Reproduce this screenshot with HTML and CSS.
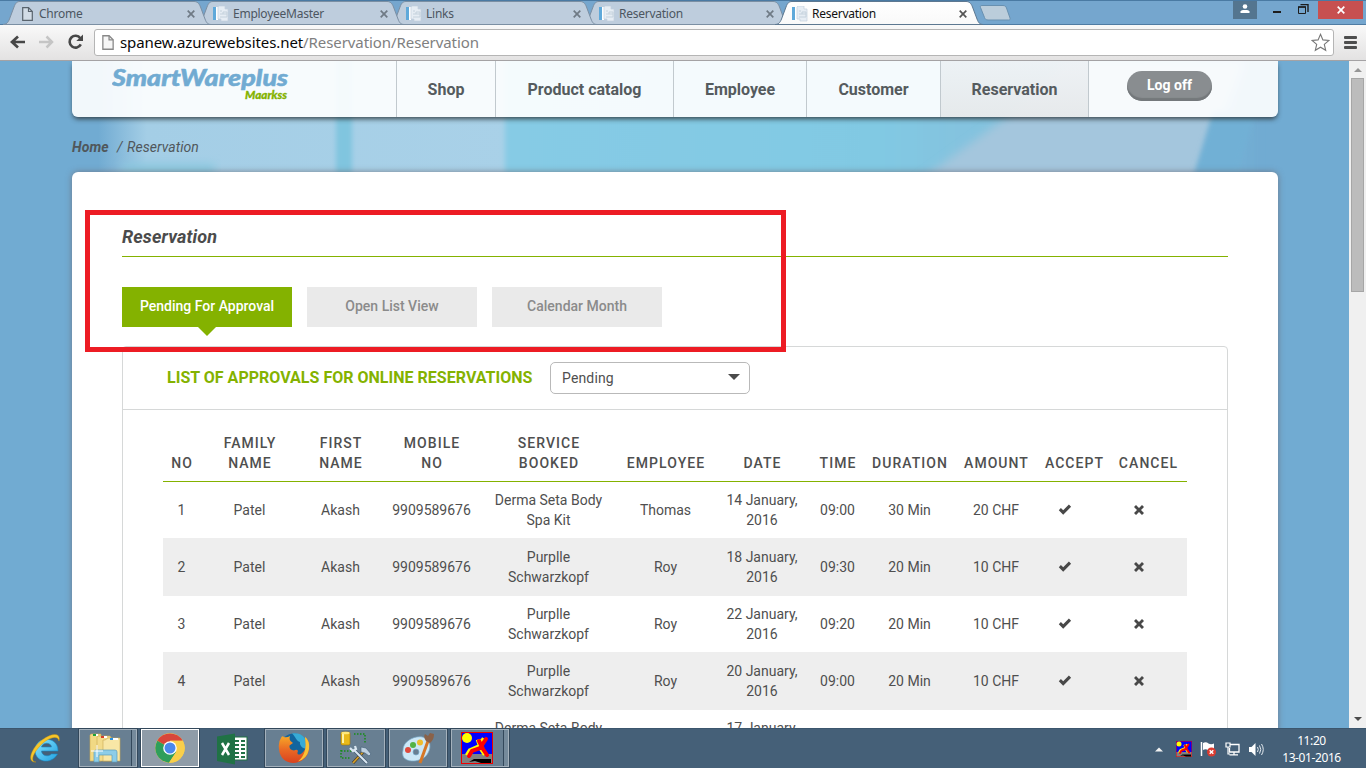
FILE: index.html
```html
<!DOCTYPE html>
<html lang="en">
<head>
<meta charset="utf-8">
<title>Reservation</title>
<link rel="stylesheet" href="styles.css">
</head>
<body>
<svg class="defs" width="0" height="0">
  <defs>
    <linearGradient id="activeTab" x2="0" y2="1"><stop stop-color="#fff"/><stop offset="1" stop-color="#f9f9f9"/></linearGradient>
    <linearGradient id="ie" x2="1" y2="1"><stop stop-color="#8be6ff"/><stop offset="1" stop-color="#1fa0e0"/></linearGradient>
    <linearGradient id="flame" x2="0" y2="1"><stop stop-color="#f7a928"/><stop offset=".5" stop-color="#ea6a24"/><stop offset="1" stop-color="#d9431f"/></linearGradient>
    <symbol id="tabshape" viewBox="0 0 208 25">
      <path d="M0 23.500C3 23.500 5 22 6.500 18L11 6C12.500 2 14 .5 17 .5H191C194 .5 196 2 197.500 6L202 18C203.500 22 205 23.500 208 23.500Z"/>
    </symbol>
    <symbol id="pagefav" viewBox="0 0 16 16">
      <rect x="0" y="1" width="3" height="13" fill="#5fa9da"/><rect x="3" y="1" width="2" height="13" fill="#fff"/>
      <path d="M6 0H12V3H15V15H8V13H5V1Z" fill="#e6edf4" stroke="#c3d0dc" stroke-width=".7"/>
      <path d="M7 5H9M7 8H14M7 11H14M10 8V6H14V11" stroke="#c4d1dc" fill="none"/>
    </symbol>
    <symbol id="doc" viewBox="0 0 11 14"><path d="M.7 .7H6.500L10.300 4.500V13.300H.7Z" stroke-width="1.200"/><path d="M6.500 .7V4.500H10.300" fill="none" stroke-width="1.200"/></symbol>
    <symbol id="x" viewBox="0 0 8 8"><path d="M.7 .7L7.300 7.300M7.300 .7L.7 7.300" stroke="currentColor" stroke-width="1.700"/></symbol>
    <symbol id="check" viewBox="0 0 14 12"><path d="M.8 6.200L2.900 4L5.200 6.200L10.900 .6L13.100 2.800L5.200 10.700Z" fill="#484848"/></symbol>
    <symbol id="cross" viewBox="0 0 12 12"><path d="M3 1L6 4L9 1L11 3L8 6L11 9L9 11L6 8L3 11L1 9L4 6L1 3Z" fill="#484848"/></symbol>
    <symbol id="runner" viewBox="0 0 32 32">
      <rect width="32" height="32" fill="#e00"/><rect x="1" y="1" width="30" height="21" fill="#00f"/><rect x="1" y="22" width="30" height="9" fill="#808080"/>
      <circle cx="6" cy="6" r="5" fill="#ff0"/><path d="M8 30L13 27L24 27H30V31H20L14 29Z" fill="#000"/>
      <path d="M7 24L10 19L19 15L24 7M18 8L21 17L25 23" fill="none" stroke="#ff0" stroke-width="4.500" transform="translate(-1 -.5)"/>
      <path d="M8 24L11 19L19 16L25 7M18 9L22 17L26 23" fill="none" stroke="#f00" stroke-width="4" stroke-linecap="round"/>
    </symbol>
  </defs>
</svg>

<div class="screen">
<header class="titlebar">
  <div class="tab z4"><svg class="shape"><use href="#tabshape"/></svg><svg class="fav docfav"><use href="#doc"/></svg><span>Chrome</span><svg class="close"><use href="#x"/></svg></div>
  <div class="tab z3"><svg class="shape"><use href="#tabshape"/></svg><svg class="fav"><use href="#pagefav"/></svg><span>EmployeeMaster</span><svg class="close"><use href="#x"/></svg></div>
  <div class="tab z2"><svg class="shape"><use href="#tabshape"/></svg><svg class="fav"><use href="#pagefav"/></svg><span>Links</span><svg class="close"><use href="#x"/></svg></div>
  <div class="tab z1"><svg class="shape"><use href="#tabshape"/></svg><svg class="fav"><use href="#pagefav"/></svg><span>Reservation</span><svg class="close"><use href="#x"/></svg></div>
  <div class="tab active"><svg class="shape"><use href="#tabshape"/></svg><svg class="fav"><use href="#pagefav"/></svg><span>Reservation</span><svg class="close"><use href="#x"/></svg></div>
  <svg class="newtab" width="32" height="16"><path d="M3 .5H24C26 .5 27 1.500 27.500 3L31 13C31.500 14.500 31 15 29.500 15H9C7 15 6 14 5.500 12.500L1.500 2.500C1 1 1.500 .5 3 .5Z" fill="#bbcddb" stroke="#6890b0"/></svg>
  <div class="winbtns">
    <span class="profile"><svg width="10" height="10"><circle cx="5" cy="2.500" r="2.300" fill="#fff"/><path d="M.5 9V7.500Q1 6 3 6H7Q9 6 9.500 7.500V9Z" fill="#fff"/></svg></span>
    <i class="min"></i>
    <svg class="restore" width="11" height="11"><path d="M.5 3H7.500V9.500H.5Z" fill="none" stroke="#1d1d1d"/><path d="M0 3H8M2.500 .5H10V8" fill="none" stroke="#1d1d1d" stroke-width="1.400"/></svg>
    <span class="quit"><svg width="8" height="8"><use href="#x"/></svg></span>
  </div>
</header>

<div class="toolbar">
  <svg class="navicons" width="84" height="18" fill="none">
    <path d="M16 9H3.500M9 3.500L3 9L9 14.500" stroke="#474747" stroke-width="2.700"/>
    <path d="M30 9H43M37.500 3.500L43 9L37.500 14.500" stroke="#c5c5c5" stroke-width="2.500"/>
    <path d="M71.300 5.200A5.900 5.900 0 1 0 71.800 11.300" stroke="#474747" stroke-width="2.600"/><path d="M74 1.500V8H67.300Z" fill="#474747"/>
  </svg>
  <div class="address">
    <svg width="12" height="15" class="pageicon"><use href="#doc"/></svg>
    <p>spanew.azurewebsites.net<span>/Reservation/Reservation</span></p>
    <svg class="star" width="19" height="19" viewBox="0 0 19 19"><path d="M9.500 1.300L11.900 6.900L17.900 7.400L13.300 11.400L14.700 17.300L9.500 14.200L4.300 17.300L5.700 11.400L1.100 7.400L7.100 6.900Z" fill="#fff" stroke="#777" stroke-width="1.100"/></svg>
  </div>
  <div class="burger"><i></i><i></i><i></i></div>
</div>

<div class="viewport">
<main class="site">
  <svg class="backdrop" width="1349" height="130">
    <defs>
      <filter id="soft" x="-5%" y="-30%" width="110%" height="160%"><feGaussianBlur stdDeviation="5"/></filter>
      <filter id="streak" x="-100%" y="-10%" width="300%" height="120%"><feGaussianBlur stdDeviation="2.500 0"/></filter>
      <filter id="softer" x="-5%" y="-30%" width="110%" height="160%"><feGaussianBlur stdDeviation="2.500"/></filter>
      <linearGradient id="sky"><stop stop-color="#71abd2"/><stop offset=".06" stop-color="#71abd2"/><stop offset=".17" stop-color="#a4cee6"/><stop offset="1" stop-color="#a9d1e8"/></linearGradient>
      <linearGradient id="aqua"><stop stop-color="#86cbe5"/><stop offset=".5" stop-color="#81c9e3"/><stop offset=".6" stop-color="#84c3df"/><stop offset=".85" stop-color="#7dc1dd"/><stop offset="1" stop-color="#71abd2"/></linearGradient>
    </defs>
    <rect width="1349" height="130" fill="#71abd2"/>
    <rect x="72" width="440" height="130" fill="url(#sky)"/>
    <rect x="336" y="-10" width="16" height="150" fill="#80c5df" filter="url(#streak)"/>
    <path d="M125 103H215V135H110Z" fill="#8ac8df" filter="url(#soft)"/>
    <path d="M505 -10H1260V140H505Z" fill="url(#aqua)" filter="url(#softer)"/>
    <path d="M1015 50L1065 0H1245L1194 130H905Z" fill="#a4c6dd" filter="url(#soft)"/>
    <path d="M1213 50L1192 120H1235L1255 50Z" fill="#71b0d5" filter="url(#softer)"/>
  </svg>

  <div class="topbar">
    <div class="logo"><svg width="180" height="44"><text x="0" y="25" textLength="176" lengthAdjust="spacingAndGlyphs" class="brand">SmartWareplus</text><text x="133" y="38" textLength="42" lengthAdjust="spacingAndGlyphs" class="sub">Maarkss</text></svg></div>
    <nav>
      <a class="n1">Shop</a><a class="n2">Product catalog</a><a class="n3">Employee</a><a class="n4">Customer</a><a class="n5 current">Reservation</a>
    </nav>
    <button class="logoff">Log off</button>
  </div>

  <div class="crumbs"><b>Home</b><span>/</span><em>Reservation</em></div>

  <section class="card">
    <h1>Reservation</h1>
    <div class="pills"><a class="on">Pending For Approval</a><a>Open List View</a><a>Calendar Month</a></div>
    <div class="panel">
      <div class="panelhead"><h2>LIST OF APPROVALS FOR ONLINE RESERVATIONS</h2><div class="select">Pending<i></i></div></div>
      <table>
        <colgroup><col class="w36"><col class="w100"><col class="w82"><col class="w100"><col class="w134"><col class="w100"><col class="w93"><col class="w58"><col class="w86"><col class="w87"><col class="w69"><col class="w79"></colgroup>
        <thead><tr><th>NO</th><th>FAMILY<br>NAME</th><th>FIRST<br>NAME</th><th>MOBILE<br>NO</th><th>SERVICE<br>BOOKED</th><th>EMPLOYEE</th><th>DATE</th><th>TIME</th><th>DURATION</th><th>AMOUNT</th><th>ACCEPT</th><th>CANCEL</th></tr></thead>
        <tbody>
          <tr><td>1</td><td>Patel</td><td>Akash</td><td>9909589676</td><td>Derma Seta Body<br>Spa Kit</td><td>Thomas</td><td>14 January,<br>2016</td><td>09:00</td><td>30 Min</td><td>20 CHF</td><td class="act"><svg width="14" height="12"><use href="#check"/></svg></td><td class="act"><svg width="12" height="12"><use href="#cross"/></svg></td></tr>
          <tr><td>2</td><td>Patel</td><td>Akash</td><td>9909589676</td><td>Purplle<br>Schwarzkopf</td><td>Roy</td><td>18 January,<br>2016</td><td>09:30</td><td>20 Min</td><td>10 CHF</td><td class="act"><svg width="14" height="12"><use href="#check"/></svg></td><td class="act"><svg width="12" height="12"><use href="#cross"/></svg></td></tr>
          <tr><td>3</td><td>Patel</td><td>Akash</td><td>9909589676</td><td>Purplle<br>Schwarzkopf</td><td>Roy</td><td>22 January,<br>2016</td><td>09:20</td><td>20 Min</td><td>10 CHF</td><td class="act"><svg width="14" height="12"><use href="#check"/></svg></td><td class="act"><svg width="12" height="12"><use href="#cross"/></svg></td></tr>
          <tr><td>4</td><td>Patel</td><td>Akash</td><td>9909589676</td><td>Purplle<br>Schwarzkopf</td><td>Roy</td><td>20 January,<br>2016</td><td>09:00</td><td>20 Min</td><td>10 CHF</td><td class="act"><svg width="14" height="12"><use href="#check"/></svg></td><td class="act"><svg width="12" height="12"><use href="#cross"/></svg></td></tr>
          <tr><td></td><td></td><td></td><td></td><td>Derma Seta Body<br>&nbsp;</td><td></td><td>17 January,<br>&nbsp;</td><td></td><td></td><td></td><td></td><td></td></tr>
        </tbody>
      </table>
    </div>
  </section>
</main>
<div class="scrollbar"><i class="up"></i><i class="thumb"></i><i class="down"></i></div>
</div>

<footer class="taskbar">
  <div class="app ie"><svg width="32" height="32" viewBox="0 0 32 32">
    <path d="M28 18H11.500C12 23.500 19 24 21.500 21H27.500C21 32.500 5 29 5 17.500C5 2.500 28.500 2.500 28 18ZM11.500 14H21.500C21 9 12.500 9 11.500 14Z" fill="url(#ie)" stroke="#168ac8" stroke-width=".6"/>
    <path d="M6 29C-4 30 1 15 12 7C23 -1 31 0 29 8C28 2 20 4 13 10C4 18 -1 29 6 29Z" fill="#f7c62b" stroke="#c79208" stroke-width=".4"/></svg></div>
  <div class="app box explorer"><svg width="34" height="32" viewBox="0 0 34 32">
    <path d="M3 2H13V29H2V3Z" fill="#f1d984" stroke="#caa850" stroke-width=".6"/><path d="M10 4H22L24 7V29H9V5Z" fill="#f3dc8b" stroke="#c9a750" stroke-width=".6"/><path d="M17 8L20 6H32V29H15V8Z" fill="#f8e7a6" stroke="#c9a750" stroke-width=".6"/>
    <path d="M5 3H10M13 5H19M22 7H30" stroke="#fff" stroke-width="2"/><path d="M5 3H8" stroke="#1ba23a" stroke-width="2"/><path d="M13 5H16" stroke="#d5402a" stroke-width="2"/><path d="M22 7H25" stroke="#2b91df" stroke-width="2"/>
    <path d="M6 30V20Q6 18 8 18H27Q29 18 29 20V30H24V23H11V30Z" fill="#8dcde8" stroke="#5b9dbb" stroke-width=".7"/><path d="M9 13V25M3 19H15" stroke="#fff" stroke-width="1"/></svg></div>
  <div class="app box chrome"><svg width="32" height="32" viewBox="0 0 32 32">
    <circle cx="16" cy="16" r="14.700" fill="#f9cf4a"/><path d="M16 16L3.300 8.700A14.700 14.700 0 0 1 28.700 8.700H16Z" fill="#d9463b"/><path d="M16 16L3.300 8.700A14.700 14.700 0 0 0 15 30.700L22.300 19.700Z" fill="#2f9e5b"/><path d="M15 30.700L22.300 19.700L21 11L16 8.700H28.700A14.700 14.700 0 0 1 15 30.700Z" fill="#f9cf4a"/><circle cx="16" cy="16" r="6.800" fill="#fff"/><circle cx="16" cy="16" r="5.500" fill="#4a88ec"/></svg></div>
  <div class="app excel"><svg width="31" height="32" viewBox="0 0 31 32"><rect x="15" y="4" width="15" height="23" fill="#fff" stroke="#207245"/><path d="M18 8H22M24 8H28M18 12H22M24 12H28M18 16H22M24 16H28M18 20H22M24 20H28M18 24H22M24 24H28" stroke="#207245" stroke-width="2.200"/><path d="M0 3.500L18 .5V31.500L0 28Z" fill="#207245"/><path d="M5 10L12 22M12 10L5 22" stroke="#fff" stroke-width="2.500"/></svg></div>
  <div class="app box firefox"><svg width="32" height="32" viewBox="0 0 32 32">
    <circle cx="16" cy="15.500" r="14" fill="#12659e"/><path d="M14 1.500C24 0 30 7 29 15C27 19 21 14 22 10C18 9 18 5 14 1.500Z" fill="#37abd6"/>
    <path d="M3 6Q4 3 6 5Q9 6 12 4Q11 7 12.500 9L15 11L11.500 13.500Q11 18 16 18.500Q19 17 20 19Q18 24 23 22Q29 18 27.500 10L27 5Q32 9 31 17C29 35 2 36 1 17Q0 10 3 6Z" fill="url(#flame)"/>
    <path d="M27 5Q32 9 31 17Q29 27 20 29.500Q30 21 27 5Z" fill="#f9c334"/></svg></div>
  <div class="app box tools"><svg width="32" height="34" viewBox="0 0 32 34"><path d="M14 3H25V12M1 19V27H11M1 20H12" fill="none" stroke="#168d16" stroke-dasharray="1.500 1.500" stroke-width="1.500"/><rect x="1" y="1" width="9" height="13" rx="1.500" fill="#e9b91b" stroke="#a57608" stroke-width=".6"/><path d="M3 3V12" stroke="#fff2a6" stroke-width="2"/><ellipse cx="5.500" cy="2" rx="4.200" ry="1.300" fill="#ffe87a"/><path d="M13 32L24 20" stroke="#4c3a25" stroke-width="3"/><path d="M13 32L24 20" stroke="#d4a12a" stroke-width="1.800"/><path d="M21 16L26 17L31 23L29 25L25 22L21 21Z" fill="#bed0e0" stroke="#405a72" stroke-width=".6"/><path d="M14 19L27 32" stroke="#435a70" stroke-width="3.200"/><path d="M14 19L27 32" stroke="#dbe8f2" stroke-width="2"/><path d="M10 17L13 20L16 18L15 15" fill="none" stroke="#dbe8f2" stroke-width="2.200"/></svg></div>
  <div class="app box paint"><svg width="34" height="32" viewBox="0 0 34 32"><path d="M2 18C2 8 17 2 24 6C30 9 30 16 27 21C23 30 5 32 2 24Q1 20 2 18ZM12 20A3 3 0 1 0 18 20A3 3 0 1 0 12 20Z" fill="#cce8f7" stroke="#78a9c9" stroke-width=".7"/><circle cx="7" cy="18" r="3" fill="#df4a3c"/><circle cx="12" cy="13" r="3" fill="#53b345"/><circle cx="19" cy="10.500" r="3" fill="#efbd2d"/><path d="M19 31L27 9" stroke="#d57726" stroke-width="3"/><path d="M25 9Q22 5 24 2L27 4L29 1L33 2Q33 8 29 11Z" fill="#8a6249"/></svg></div>
  <div class="app box run"><svg width="32" height="32"><use href="#runner"/></svg></div>
  <div class="tray">
    <svg class="t1" width="8" height="5"><path d="M0 4.500L4 .5L8 4.500Z" fill="#f2f2f2"/></svg>
    <svg class="t2" width="16" height="16"><use href="#runner"/></svg>
    <svg class="t3" width="17" height="16"><path d="M1.500 1V15" stroke="#fff" stroke-width="1.500"/><path d="M3 2Q6 .5 8.500 2.500Q11 4 14 2.500V9Q11 10.500 8 9Q5.500 7.500 3 9Z" fill="#fff"/><circle cx="11.500" cy="11" r="4.500" fill="#da3b30"/><path d="M9.700 9.200L13.300 12.800M13.300 9.200L9.700 12.800" stroke="#fff" stroke-width="1.400"/></svg>
    <svg class="t4" width="15" height="14" fill="none"><path d="M5 2.500H14V10H4.500V6M4.500 12.800H13M9 10V13" stroke="#fff" stroke-width="1.300"/><path d="M1 1H5V5H1ZM3 5V12H5" stroke="#fff" stroke-width="1.200"/></svg>
    <svg class="t5" width="17" height="15" fill="none"><path d="M1 5H3.500L7.500 1V14L3.500 10H1Z" fill="#fff"/><path d="M9.500 5Q11 7.500 9.500 10M11.500 3.500Q14 7.500 11.500 11.500M13.500 2Q17 7.500 13.500 13" stroke="#e5ebf0"/></svg>
    <div class="clock">11:20<br>13-01-2016</div>
  </div>
</footer>
<div class="marker"></div>
</div>
</body>
</html>
```
FILE: styles.css
```css
* { box-sizing: border-box; }
body { margin: 0; font-family: Roboto, sans-serif; color: #4f4f4f; overflow: hidden; }
svg { display: block; flex: none; }
.defs { position: absolute; }
.screen { position: relative; width: 1366px; height: 768px; display: flex; flex-direction: column; overflow: hidden; }

.titlebar { height: 25px; flex: none; display: flex; background: #75a6ce; border-top: 1px solid #4a7aa3; border-bottom: 1px solid #4f7ca3; font: 12px "Noto Sans", sans-serif; color: #4c5661; }
.tab { position: relative; width: 193px; height: 24px; flex: none; display: flex; align-items: center; padding: 1px 0 0 20px; }
.tab .shape { position: absolute; left: 3px; top: 0; width: 208px; height: 25px; fill: #becddd; stroke: #7b8fa3; }
.tab span { position: relative; flex: 1; letter-spacing: -.25px; }
.tab .fav { position: relative; width: 16px; height: 16px; margin-right: 4px; }
.tab .docfav { width: 11px; height: 14px; margin: 0 6px 0 2px; fill: #d2dce6; stroke: #59636d; }
.tab .close { position: relative; width: 8px; height: 8px; margin-right: -2px; color: #6f7a85; }
.z4 { z-index: 4; } .z3 { z-index: 3; } .z2 { z-index: 2; } .z1 { z-index: 1; }
.tab.active { color: #111; z-index: 5; }
.tab.active .shape { fill: url(#activeTab); stroke: #5d7891; }
.tab.active .close { color: #555; }
.newtab { margin: 4px 0 0 14px; }
.winbtns { margin-left: auto; display: flex; align-items: flex-start; }
.profile { width: 24px; height: 18px; background: #54758f; display: flex; justify-content: center; padding-top: 3px; }
.min { width: 8px; height: 2px; background: #1d1d1d; margin: 10px 17px 0 16px; }
.restore { margin: 3px 9px 0 0; }
.quit { width: 45px; height: 18px; margin-right: 3px; background: #c75050; color: #fff; display: flex; align-items: center; justify-content: center; }
.winbtns { padding-right: 0; }

.toolbar { height: 36px; flex: none; display: flex; align-items: flex-start; padding: 4px 9px 0; background: linear-gradient(#f9f9f9, #e3e2e2); border-bottom: 1px solid #a4a2a4; }
.navicons { margin: 4px 1px 0 0; }
.address { width: 1240px; height: 27px; border: 1px solid #b5b5b5; border-radius: 3px; background: #fff; display: flex; align-items: center; padding: 0 3px 0 7px; font: 15px "Noto Sans", sans-serif; color: #080808; }
.address p { margin: -2px 0 0; flex: 1; padding-left: 6px; letter-spacing: -.08px; }
.address p span { color: #808080; }
.pageicon { fill: #f6f6f6; stroke: #888; }
.burger { margin: 7px 0 0 10px; display: grid; gap: 2px; }
.burger i { width: 13px; height: 3px; border-radius: 1px; background: #4e4e4e; }

.viewport { height: 667px; flex: none; display: flex; overflow: hidden; }
.site { position: relative; width: 1349px; height: 667px; background: #71abd2; padding: 0 71px 0 72px; overflow: hidden; }
.backdrop { position: absolute; left: 0; top: 0; }
.topbar { position: relative; height: 56px; display: flex; background: rgba(255,255,255,.91); border-radius: 0 0 6px 6px; box-shadow: 0 3px 5px -1px rgba(45,55,60,.9); clip-path: inset(0 -12px -14px -12px); }
.logo { width: 324px; padding-left: 40px; }
.brand { font: italic 900 22px Lato, sans-serif; fill: #71abd2; stroke: #71abd2; stroke-width: .5px; }
.sub { font: italic 900 11px Lato, sans-serif; fill: #84b200; stroke: #84b200; stroke-width: .3px; }
nav { display: flex; }
nav a { border-left: 1px solid #c1c9ce; height: 56px; line-height: 57px; text-align: center; font-size: 16px; font-weight: 700; color: #555b5e; }
.n1 { width: 99px; } .n2 { width: 178px; } .n3 { width: 133px; } .n4 { width: 134px; } .n5 { width: 149px; border-right: 1px solid #c1c9ce; }
.current { background: linear-gradient(rgba(225,230,235,.4), rgba(223,226,228,.7)); }
.logoff { width: 85px; height: 30px; margin: 10px 0 0 38px; padding: 0 0 2px; border: 0; border-radius: 15px; background: #898d90; box-shadow: inset 0 -3px 1px #74787b; color: #fff; font: 700 14px Roboto, sans-serif; }

.crumbs { position: relative; height: 55px; display: flex; font-size: 14px; font-style: italic; line-height: 60px; color: #50575b; }
.crumbs b { width: 45px; letter-spacing: .1px; }
.crumbs span { width: 10px; }
.crumbs em { letter-spacing: .05px; }

.card { position: relative; height: 650px; background: #fff; border-radius: 6px 6px 0 0; box-shadow: 0 0 6px rgba(110,110,120,.8); padding: 0 50px; }
h1 { margin: 0 0 30px; height: 85px; padding-top: 54px; border-bottom: 1px solid #84b200; font: italic 700 18px/22px Roboto, sans-serif; letter-spacing: .12px; color: #4b4b4b; }
.pills { display: flex; gap: 15px; height: 59px; }
.pills a { width: 170px; height: 40px; background: #eaeaea; color: #8b8b8b; font-weight: 500; font-size: 14px; line-height: 39px; text-align: center; }
.pills .on { background: #84b200; color: #fff; }
.pills .on::after { content: ""; display: block; width: 0; margin: 1px auto 0; border: 9px solid transparent; border-bottom: 0; border-top-color: #84b200; }
.panel { height: 450px; border: 1px solid #d6d8d8; border-radius: 4px; }
.panelhead { height: 63px; display: flex; align-items: center; padding-left: 44px; border-bottom: 1px solid #d6d8d8; }
h2 { width: 383px; margin: -2px 0 0; font-size: 16px; font-weight: 700; color: #84b200; white-space: nowrap; letter-spacing: .02px; }
.select { width: 200px; height: 32px; border: 1px solid #b9b9b9; border-radius: 5px; padding: 0 9px 0 11px; display: flex; align-items: center; justify-content: space-between; font-size: 14px; letter-spacing: .15px; }
.select i { border: 6px solid transparent; border-top-color: #4b4b4b; border-bottom: 0; margin-bottom: 2px; }

table { width: 1024px; margin: 0 0 0 40px; table-layout: fixed; border-collapse: separate; border-spacing: 0; text-align: center; font-size: 14px; line-height: 20px; }
th, td { padding: 0 0 0 1px; white-space: nowrap; }
th { height: 72px; vertical-align: bottom; padding-bottom: 8px; padding-left: 2px; border-bottom: 1px solid #84b200; font-weight: 500; letter-spacing: 1.05px; }
td { height: 56px; vertical-align: middle; }
tbody tr:nth-child(even) td { height: 58px; background: #eee; }
.act { padding-right: 19px; }
.act svg { margin: 0 auto; }
.w36 { width: 36px; } .w100 { width: 100px; } .w82 { width: 82px; } .w134 { width: 134px; } .w93 { width: 93px; } .w58 { width: 58px; } .w86 { width: 86px; } .w87 { width: 87px; } .w69 { width: 69px; } .w79 { width: 79px; }

.scrollbar { width: 17px; background: #f0f0f0; display: flex; flex-direction: column; align-items: center; }
.up { border: 4px solid transparent; border-top: 0; border-bottom-color: #959595; margin: 7px 0 6px; }
.thumb { width: 13px; height: 214px; background: #bcbcbc; border: 1px solid #a6a6a6; }
.down { border: 4px solid transparent; border-bottom: 0; border-top-color: #4c4c4c; margin: auto 0 7px; }

.taskbar { height: 40px; flex: none; display: flex; align-items: flex-start; background: #456078; border-top: 1px solid #3c566d; }
.app { height: 39px; display: flex; align-items: center; justify-content: center; }
.box { width: 58px; height: 38px; margin-right: 4px; border: 1px solid #a4b1bc; background: #687f92; outline: 1px solid #33485b; }
.ie { width: 79px; padding-left: 13px; }
.explorer { margin-right: 3px; box-shadow: inset -4px 0 #758a9b, inset -5px 0 #33485b; padding-right: 6px; }
.chrome { width: 58px; background: #8f9ca8; border: 1px solid #fff; margin: 0 0 0 1px; }
.excel { width: 66px; padding-left: 1px; }
.run { box-shadow: inset -4px 0 #758a9b, inset -5px 0 #33485b; padding-right: 6px; }
.tray { margin-left: auto; display: flex; align-items: center; height: 40px; }
.t2 { margin-left: 13px; } .t3 { margin-left: 8px; } .t4 { margin-left: 8px; } .t5 { margin-left: 8px; }
.clock { width: 101px; text-align: center; color: #fff; font: 12px/17px "Noto Sans", sans-serif; letter-spacing: -.4px; padding-right: 8px; }

/* highlight frame drawn over the page */
.marker { position: absolute; left: 85px; top: 210px; width: 701px; height: 142px; border: 5px solid #ed1c24; }
```
